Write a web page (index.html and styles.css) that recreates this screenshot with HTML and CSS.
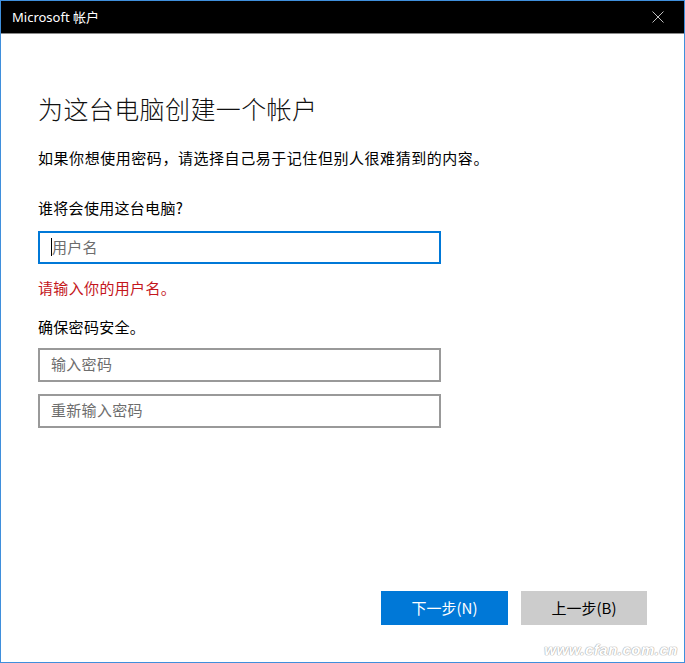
FILE: index.html
```html
<!DOCTYPE html>
<html lang="zh-CN">
<head>
<meta charset="utf-8">
<title>Microsoft 帐户</title>
<link rel="stylesheet" href="styles.css">
</head>
<body>
<div class="window">
  <div class="titlebar">
    <span class="title">Microsoft 帐户</span>
    <span class="close" aria-label="关闭">
      <svg width="12" height="12" viewBox="0 0 12 12"><path d="M0.5 0.5L11.5 11.5M11.5 0.5L0.5 11.5" stroke="#bdbdbd" stroke-width="1"/></svg>
    </span>
  </div>
  <div class="content">
    <h1 class="heading">为这台电脑创建一个帐户</h1>
    <p class="desc">如果你想使用密码，请选择自己易于记住但别人很难猜到的内容。</p>
    <p class="label label-who">谁将会使用这台电脑?</p>
    <div class="field field-focus"><span class="caret"></span><span class="ph">用户名</span></div>
    <p class="error">请输入你的用户名。</p>
    <p class="label label-secure">确保密码安全。</p>
    <div class="field field-pw"><span class="ph">输入密码</span></div>
    <div class="field field-pw2"><span class="ph">重新输入密码</span></div>
    <div class="footer">
      <button class="btn btn-primary">下一步(N)</button>
      <button class="btn btn-secondary">上一步(B)</button>
    </div>
  </div>
  <div class="watermark">www.cfan.com.cn</div>
</div>
</body>
</html>
```
FILE: styles.css
```css
* { box-sizing: border-box; }
html, body { margin: 0; padding: 0; background: #fff; }
body { font-family: "Noto Sans CJK SC", "Noto Sans", "Liberation Sans", sans-serif; color: #000; }

.window {
  position: relative;
  width: 685px;
  height: 663px;
  border: 1px solid #3f8fdc;
  display: flex;
  flex-direction: column;
  background: #fff;
  overflow: hidden;
}

.titlebar {
  height: 33px;
  flex: none;
  background: #000;
  border-bottom: 1px solid #8a8a8a;
  display: flex;
  align-items: center;
  justify-content: space-between;
  padding: 0 20px 0 11px;
}
.title {
  color: #fff;
  font-family: "Noto Sans", "Noto Sans CJK SC", sans-serif;
  font-size: 13px;
  line-height: 16px;
  margin-top: -1px;
}
.close { display: flex; width: 12px; height: 12px; }

.content {
  flex: 1;
  display: flex;
  flex-direction: column;
  padding: 0 37px 37px 37px;
}

.heading {
  margin: 57px 0 0 0;
  font-size: 25px;
  line-height: 34px;
  font-weight: 300;
  letter-spacing: 0.4px;
  color: #111;
}
.desc {
  margin: 23px 0 0 0;
  font-size: 15px;
  line-height: 20px;
  letter-spacing: 0.55px;
}
.label {
  margin: 0;
  font-size: 15px;
  line-height: 20px;
  letter-spacing: 0.3px;
}
.label-who { margin-top: 30px; }
.label-secure { margin-top: 19px; }
.error {
  margin: 14px 0 0 0;
  font-size: 15px;
  line-height: 20px;
  letter-spacing: 0.35px;
  color: #c4161c;
}

.field {
  width: 403px;
  height: 34px;
  border: 2px solid #999;
  display: flex;
  align-items: center;
  padding-left: 11px;
  padding-bottom: 2px;
  background: #fff;
}
.field-focus { margin-top: 13px; height: 33px; border-color: #0078d7; }
.field-pw { margin-top: 11px; }
.field-pw2 { margin-top: 12px; }
.caret {
  width: 1px;
  height: 18px;
  background: #000;
}
.ph {
  font-size: 15px;
  line-height: 20px;
  letter-spacing: 0.3px;
  color: #6d6d6d;
}

.footer {
  margin-top: auto;
  display: flex;
  justify-content: flex-end;
  gap: 13px;
}
.btn {
  width: 127px;
  height: 34px;
  border: none;
  margin: 0;
  padding: 0;
  font-family: "Noto Sans CJK SC", "Noto Sans", sans-serif;
  font-size: 15px;
  line-height: 20px;
}
.btn-primary { background: #0078d7; color: #fff; }
.btn-secondary { background: #cccccc; color: #000; width: 126px; }

.watermark {
  position: absolute;
  right: 6px;
  bottom: 4px;
  font-family: "Liberation Sans", sans-serif;
  font-style: italic;
  font-weight: bold;
  font-size: 15px;
  letter-spacing: 0.5px;
  color: #fff;
  text-shadow: 0 0 1px #aaa, 0 0 1px #aaa, 0 0 1px #aaa;
}
```
